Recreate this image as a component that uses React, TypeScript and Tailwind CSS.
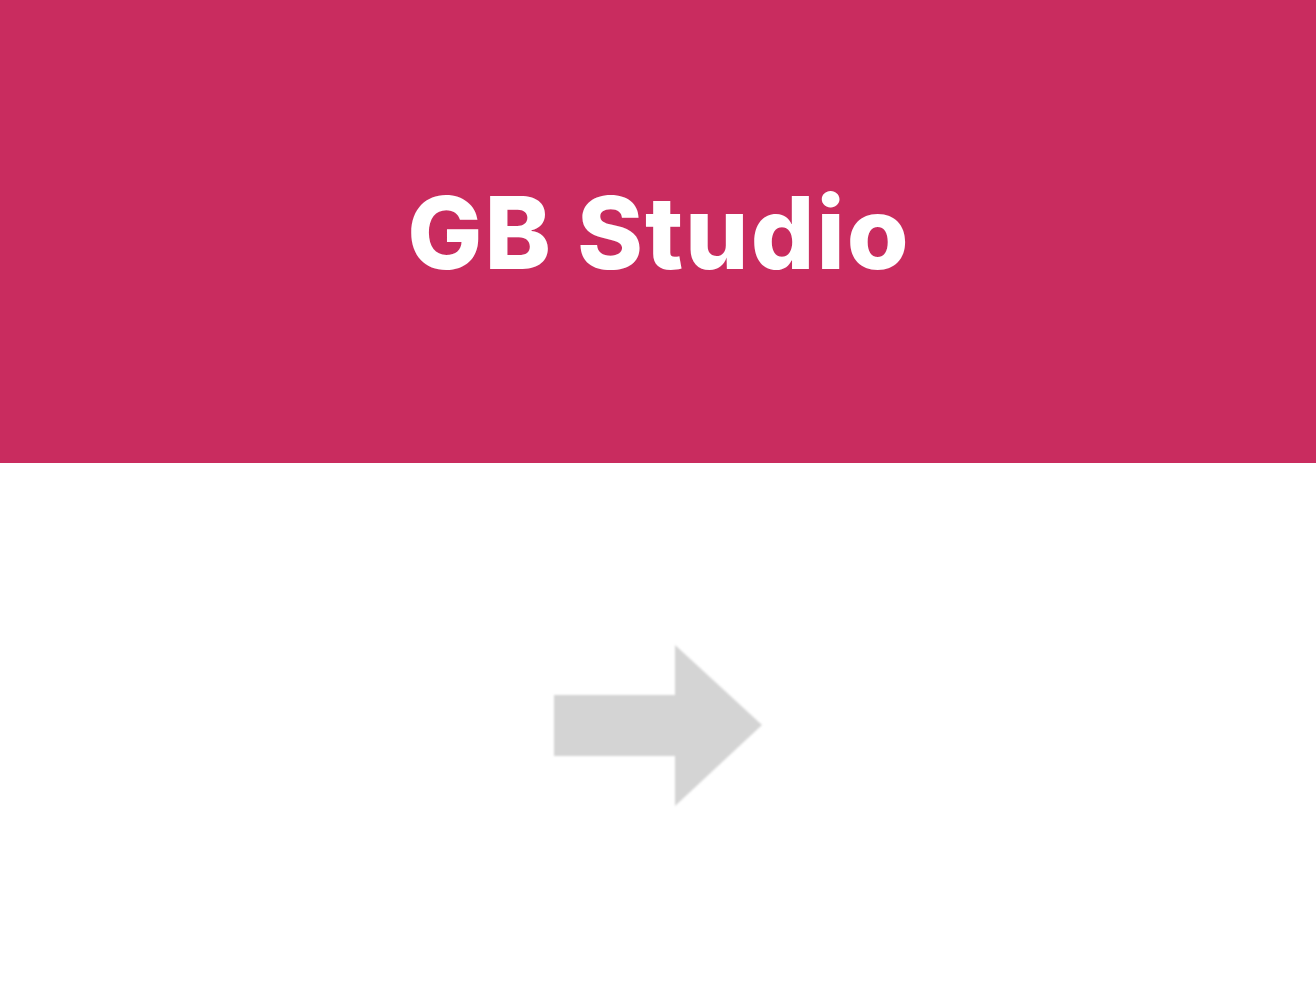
export default function App() {
  return (
    <div className="w-[1316px] h-[996px] flex flex-col bg-white overflow-hidden">
      <div className="h-[463px] bg-[#c92c5f] flex items-center justify-center">
        <h1
          className="text-white text-[100px] font-extrabold leading-none tracking-[2px] pl-[2px] mt-[2px]"
          style={{ fontFamily: "Inter, 'Open Sans', sans-serif" }}
        >
          GB Studio
        </h1>
      </div>
      <div className="flex-1 flex items-center justify-center pl-[2px]">
        <svg width="210" height="162" viewBox="0 0 210 162" className="blur-[1px] -mt-[8px]">
          <path d="M0 50 H121 V0 L208 80 L121 161 V111 H0 Z" fill="#d4d4d4" />
        </svg>
      </div>
    </div>
  );
}
